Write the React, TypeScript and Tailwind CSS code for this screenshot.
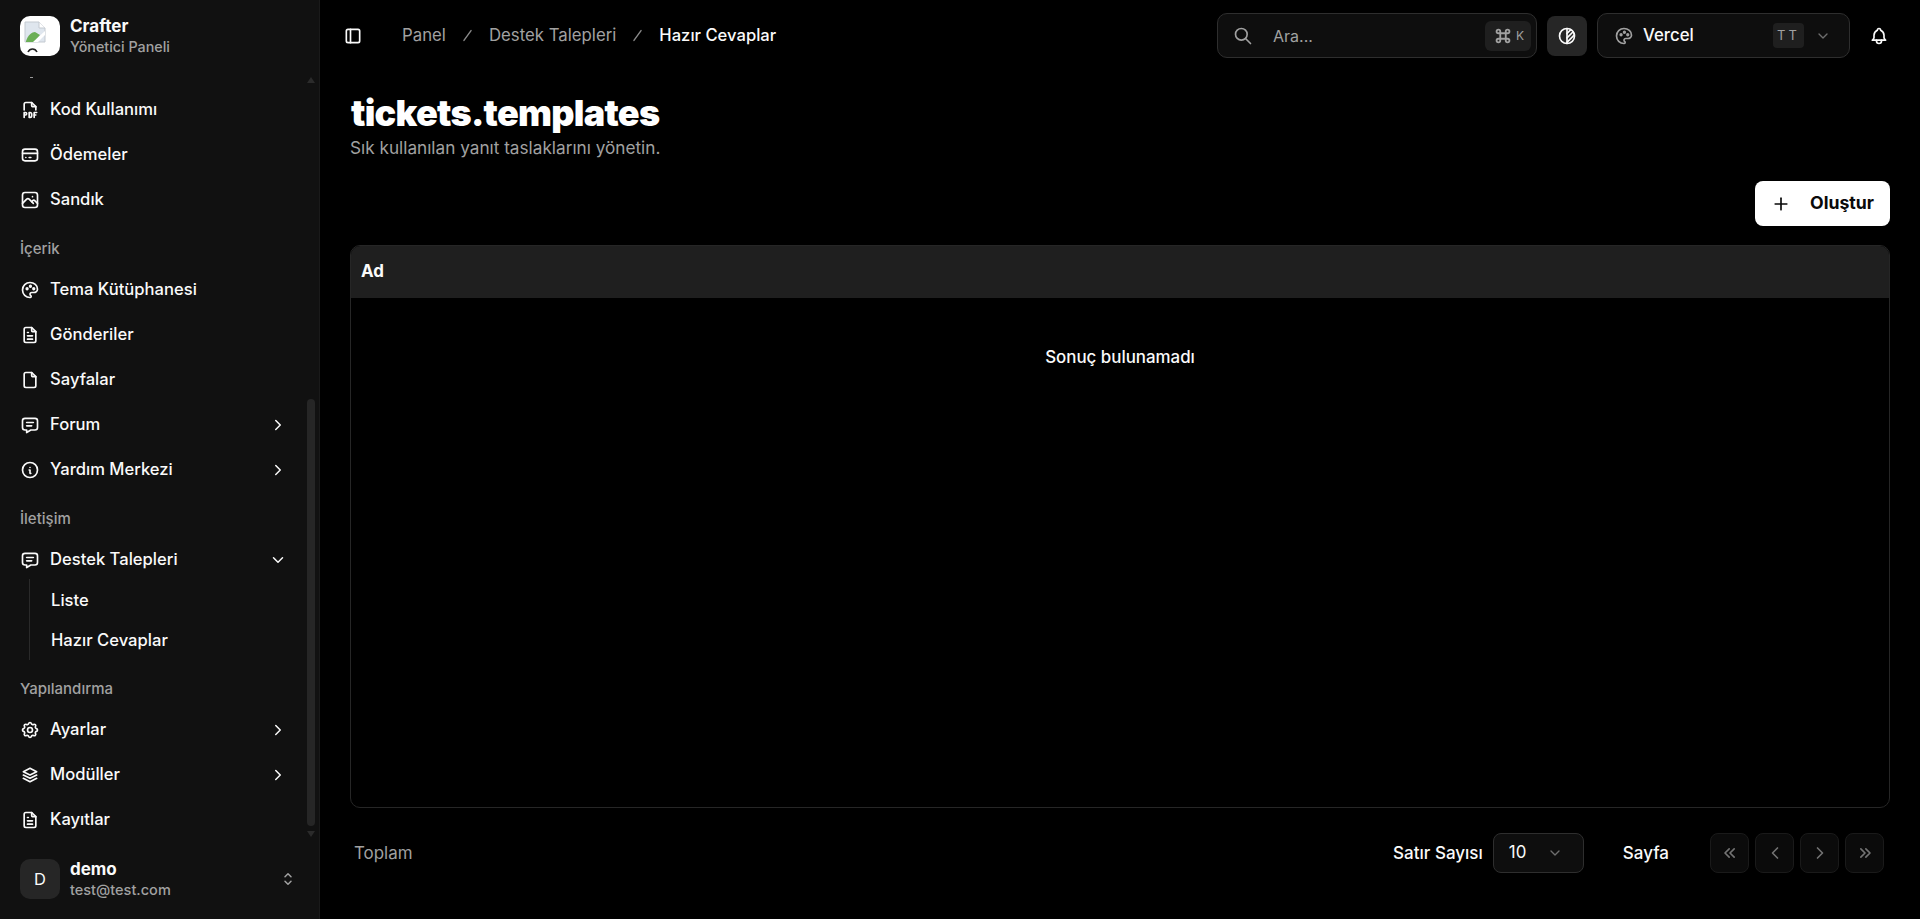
import type { ReactNode } from 'react'
import {
  TbBell,
  TbBrightness,
  TbChevronDown,
  TbChevronLeft,
  TbChevronRight,
  TbChevronsLeft,
  TbChevronsRight,
  TbCommand,
  TbCreditCard,
  TbFile,
  TbFileText,
  TbFileTypePdf,
  TbInfoCircle,
  TbLayoutSidebar,
  TbMessage,
  TbPalette,
  TbPhoto,
  TbPlus,
  TbSearch,
  TbSelector,
  TbSettings,
  TbSlash,
  TbStack2,
} from 'react-icons/tb'

function NavItem({ icon, label, arrow }: { icon: ReactNode; label: string; arrow?: 'right' | 'down' }) {
  return (
    <div className="h-[45px] flex items-center pl-[20px] pr-[32px] text-[16.6px] font-medium text-[#fafafa]">
      <span className="w-[20px] flex justify-center text-[20px]">{icon}</span>
      <span className="ml-[10px] flex-1">{label}</span>
      {arrow === 'right' && <TbChevronRight className="text-[18px]" />}
      {arrow === 'down' && <TbChevronDown className="text-[18px]" />}
    </div>
  )
}

function SectionLabel({ children, className }: { children: string; className: string }) {
  return <div className={`pl-[20px] text-[15px] font-medium text-[#a1a1a1] leading-[20px] ${className}`}>{children}</div>
}

function PagerButton({ children }: { children: ReactNode }) {
  return (
    <div className="w-[39px] h-[40px] rounded-[8px] border border-[#1a1a1a] bg-[#0b0b0b] flex items-center justify-center text-[20px] text-[#737373]">
      {children}
    </div>
  )
}

function Sidebar() {
  return (
    <aside className="w-[320px] h-full shrink-0 bg-[#111111] border-r border-[#1a1a1a] flex flex-col">
      <div className="h-[72px] shrink-0 flex items-center pl-[20px]">
        <div className="w-[40px] h-[40px] rounded-[10px] bg-white overflow-hidden">
          <svg viewBox="0 0 40 40" className="w-full h-full">
            <path d="M5 6h14l6 6v14H5z" fill="#dfe6ee" stroke="#c3c9d0" strokeWidth="1" />
            <path d="M19 6v6h6" fill="#fff" stroke="#c3c9d0" strokeWidth="1" />
            <path d="M6 25c2-6 6-9 9-9l5 3-6 7H6z" fill="#6aae55" />
            <path d="M13 26l12-11v4l-7 7z" fill="#fff" />
            <path d="M8 36c2-4 7-4 9 0" fill="none" stroke="#222" strokeWidth="1.6" />
          </svg>
        </div>
        <div className="ml-[10px]">
          <div className="text-[17px] font-bold leading-[22px] text-[#fafafa]">Crafter</div>
          <div className="text-[14.3px] font-medium leading-[20px] text-[#a1a1a1]">Yönetici Paneli</div>
        </div>
      </div>

      <div className="relative flex-1 min-h-0 overflow-hidden">
        <div className="-mt-[9px] pt-[14px]">
          <div className="h-[10px] pl-[30px]">
            <div className="w-[3px] h-px bg-[#999]" />
          </div>
          <NavItem icon={<TbFileTypePdf />} label="Kod Kullanımı" />
          <NavItem icon={<TbCreditCard />} label="Ödemeler" />
          <NavItem icon={<TbPhoto />} label="Sandık" />
          <SectionLabel className="mt-[17px] mb-[8px]">İçerik</SectionLabel>
          <NavItem icon={<TbPalette />} label="Tema Kütüphanesi" />
          <NavItem icon={<TbFileText />} label="Gönderiler" />
          <NavItem icon={<TbFile />} label="Sayfalar" />
          <NavItem icon={<TbMessage />} label="Forum" arrow="right" />
          <NavItem icon={<TbInfoCircle />} label="Yardım Merkezi" arrow="right" />
          <SectionLabel className="mt-[17px] mb-[8px]">İletişim</SectionLabel>
          <NavItem icon={<TbMessage />} label="Destek Talepleri" arrow="down" />
          <div className="-mt-[3px] ml-[29px] pl-[21px] pt-[1px] border-l border-[#2a2a2a] text-[16.6px] font-medium text-[#fafafa]">
            <div className="h-[40px] flex items-center">Liste</div>
            <div className="h-[40px] flex items-center">Hazır Cevaplar</div>
          </div>
          <SectionLabel className="mt-[19px] mb-[8px]">Yapılandırma</SectionLabel>
          <NavItem icon={<TbSettings />} label="Ayarlar" arrow="right" />
          <NavItem icon={<TbStack2 />} label="Modüller" arrow="right" />
          <NavItem icon={<TbFileText />} label="Kayıtlar" />
        </div>
        {/* scrollbar */}
        <div className="absolute right-[4px] top-0 bottom-0 w-[8px]">
          <div className="absolute top-[5px] left-0 w-0 h-0 border-x-4 border-x-transparent border-b-[6px] border-b-[#2b2b2b]" />
          <div className="absolute top-[327px] left-0 w-[8px] h-[427px] rounded-[4px] bg-[#262626]" />
          <div className="absolute top-[759px] left-0 w-0 h-0 border-x-4 border-x-transparent border-t-[6px] border-t-[#2b2b2b]" />
        </div>
      </div>

      <div className="h-[69px] shrink-0 flex items-center pl-[20px] pr-[22px] pb-[11px]">
        <div className="w-[40px] h-[40px] rounded-[10px] bg-[#262626] flex items-center justify-center text-[16.5px] text-[#fafafa]">D</div>
        <div className="ml-[10px] flex-1">
          <div className="text-[17px] font-bold leading-[21px] text-[#fafafa]">demo</div>
          <div className="text-[14.5px] font-medium leading-[20px] text-[#a1a1a1]">test@test.com</div>
        </div>
        <TbSelector className="text-[18px] text-[#a1a1a1]" />
      </div>
    </aside>
  )
}

function Header() {
  return (
    <header className="h-[72px] shrink-0 flex items-center pl-[23px] pr-[30px] pb-[1px]">
      <TbLayoutSidebar className="text-[20px] text-[#fafafa]" />
      <nav className="ml-[39px] flex items-center text-[16.8px] text-[#a1a1a1]">
        <span>Panel</span>
        <TbSlash className="mx-[13px] text-[17px] text-[#8a8a8a]" />
        <span>Destek Talepleri</span>
        <TbSlash className="mx-[13px] text-[17px] text-[#8a8a8a]" />
        <span className="text-[16.6px] font-medium text-[#fafafa]">Hazır Cevaplar</span>
      </nav>

      <div className="ml-auto flex items-center">
        <div className="w-[320px] h-[45px] rounded-[10px] border border-[#2e2e2e] bg-[#0e0e0e] flex items-center pl-[15px] pr-[5px]">
          <TbSearch className="text-[20px] text-[#a1a1a1]" />
          <span className="ml-[20px] flex-1 text-[16px] text-[#a1a1a1]">Ara...</span>
          <span className="w-[46px] h-[30px] rounded-[6px] bg-[#1f1f1f] flex items-center justify-center gap-[2px] text-[12px] text-[#a1a1a1]">
            <TbCommand className="text-[22px]" />K
          </span>
        </div>
        <div className="ml-[10px] w-[40px] h-[40px] rounded-[8px] bg-[#262626] flex items-center justify-center">
          <TbBrightness className="text-[20px] text-[#fafafa]" />
        </div>
        <div className="ml-[10px] w-[253px] h-[45px] rounded-[10px] border border-[#2e2e2e] bg-[#0e0e0e] flex items-center pl-[16px] pr-[18px]">
          <TbPalette className="text-[20px] text-[#a1a1a1]" />
          <span className="ml-[9px] flex-1 text-[16.8px] font-medium text-[#fafafa]">Vercel</span>
          <span className="w-[31px] h-[25px] rounded-[4px] bg-[#1f1f1f] flex items-center justify-center text-[13px] tracking-[3px] text-[#a1a1a1]">TT</span>
          <TbChevronDown className="ml-[11px] text-[16px] text-[#6e6e6e]" />
        </div>
        <TbBell className="ml-[19px] mr-[1px] text-[20px] text-[#fafafa]" />
      </div>
    </header>
  )
}

export default function App() {
  return (
    <div className="h-screen w-full flex bg-black overflow-hidden font-['Inter',sans-serif]">
      <Sidebar />
      <main className="flex-1 min-w-0 flex flex-col">
        <Header />
        <div className="flex-1 min-h-0 flex flex-col pl-[30px] pr-[30px]">
          <h1 className="mt-[21px] pl-[1px] text-[36px] leading-[40px] font-black tracking-[-0.02em] text-white">tickets.templates</h1>
          <p className="mt-[5px] text-[17.2px] leading-[20px] text-[#a1a1a1]">Sık kullanılan yanıt taslaklarını yönetin.</p>

          <div className="mt-[23px] flex justify-end">
            <button className="w-[135px] h-[45px] rounded-[8px] bg-white flex items-center pl-[16px] text-[17.7px] font-bold text-[#0a0a0a]">
              <TbPlus className="text-[20px]" />
              <span className="ml-[19px]">Oluştur</span>
            </button>
          </div>

          <div className="mt-[19px] h-[563px] rounded-[10px] border border-[#262626] overflow-hidden">
            <div className="h-[52px] bg-[#1f1f1f] flex items-center pl-[10px] text-[16.9px] font-bold text-[#fafafa]">Ad</div>
            <div className="pt-[47px] text-center text-[16.9px] font-medium text-[#fafafa] leading-[24px]">Sonuç bulunamadı</div>
          </div>

          <div className="mt-[25px] flex items-center pl-[4px] pr-[6px]">
            <span className="pt-[2px] text-[16.9px] text-[#a1a1a1]">Toplam</span>
            <span className="ml-auto pt-[2px] text-[17px] font-medium text-[#fafafa]">Satır Sayısı</span>
            <div className="ml-[10px] w-[91px] h-[40px] rounded-[8px] border border-[#2e2e2e] bg-[#0e0e0e] flex items-center justify-between pl-[15px] pr-[20px] text-[16.9px] text-[#fafafa]">
              10
              <TbChevronDown className="text-[16px] text-[#6e6e6e]" />
            </div>
            <span className="ml-[39px] pt-[2px] text-[17px] font-medium text-[#fafafa]">Sayfa</span>
            <div className="ml-[41px] flex gap-[6px]">
              <PagerButton><TbChevronsLeft /></PagerButton>
              <PagerButton><TbChevronLeft /></PagerButton>
              <PagerButton><TbChevronRight /></PagerButton>
              <PagerButton><TbChevronsRight /></PagerButton>
            </div>
          </div>
        </div>
      </main>
    </div>
  )
}
